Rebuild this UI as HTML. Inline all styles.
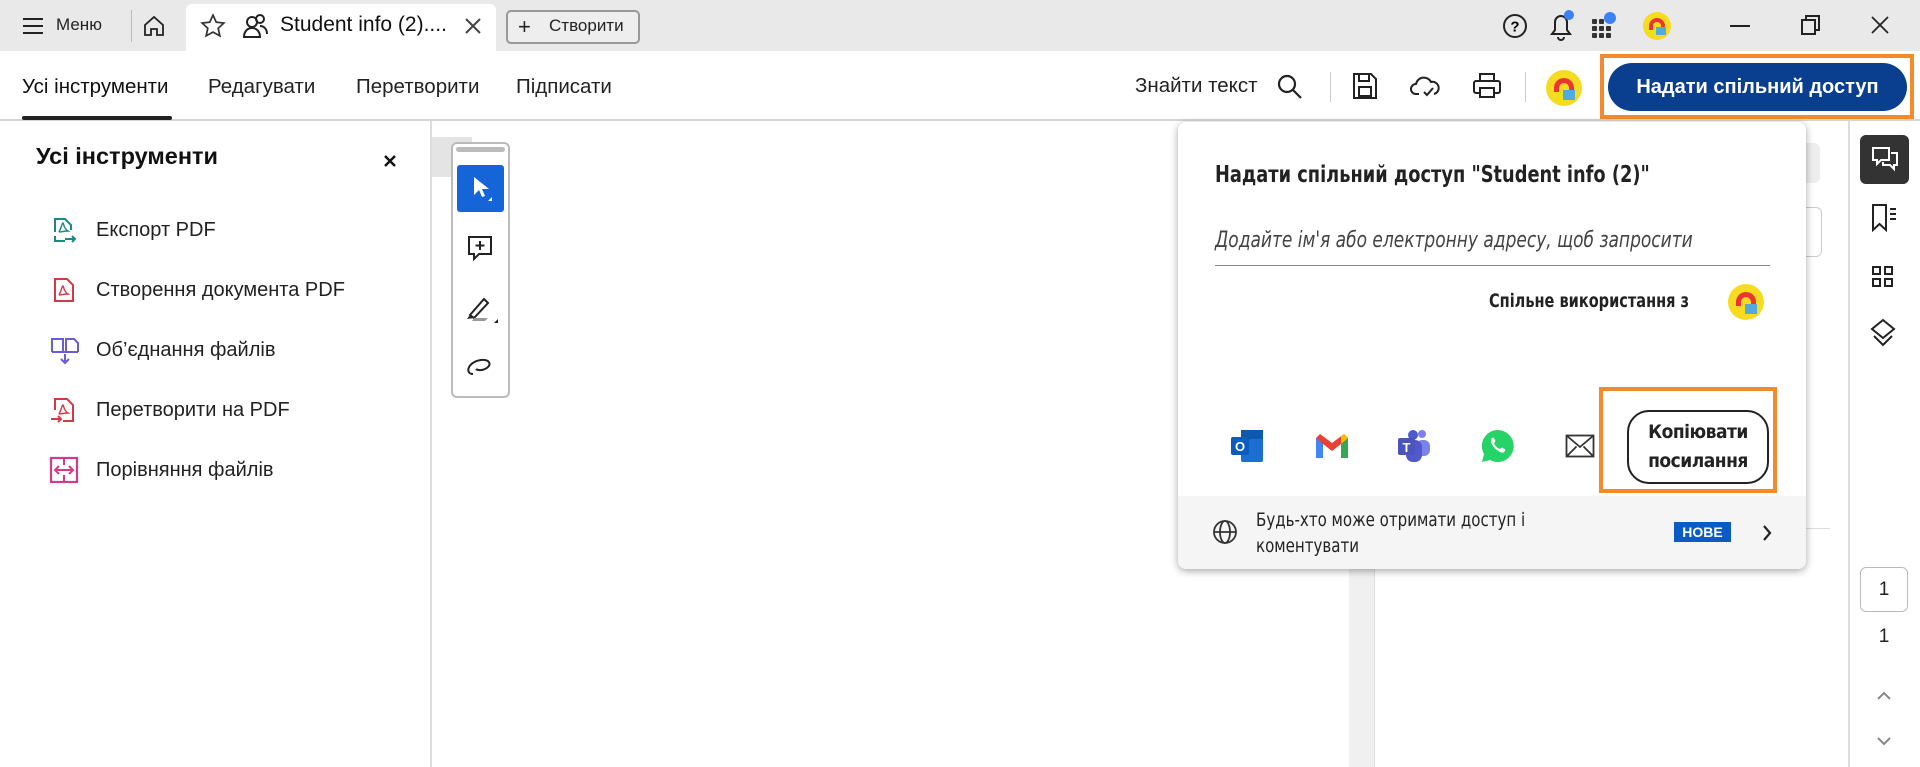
<!DOCTYPE html>
<html><head><meta charset="utf-8"><style>
*{box-sizing:border-box;margin:0;padding:0}
body{width:1920px;height:767px;overflow:hidden;background:#fff;font-family:"Liberation Sans",sans-serif;color:#222;position:relative}
.a{position:absolute}
.t{white-space:nowrap}
svg{position:absolute}
</style></head><body>
<!-- tab bar -->
<div class="a" style="left:0;top:0;width:1920px;height:51px;background:#e9e9e9"></div>
<div class="a" style="left:186px;top:4px;width:310px;height:47px;background:#fff;border-radius:6px 6px 0 0"></div>
<svg style="left:22px;top:17px" width="22" height="18"><path d="M1 2h20M1 9h20M1 16h20" stroke="#222" stroke-width="2"/></svg>
<div class="a t" style="left:56px;top:15px;font-size:17px">Меню</div>
<div class="a" style="left:131px;top:10px;width:1px;height:32px;background:#bbb"></div>
<svg style="left:142px;top:14px" width="24" height="24" viewBox="0 0 24 24"><path d="M3 11L12 3l9 8v10h-6v-6h-6v6H3z" fill="none" stroke="#222" stroke-width="1.8"/></svg>
<svg style="left:200px;top:13px" width="26" height="26" viewBox="0 0 24 24"><path d="M12 2l3 6.5 7 .8-5.2 4.8 1.5 7L12 17.6 5.7 21.1l1.5-7L2 9.3l7-.8z" fill="none" stroke="#333" stroke-width="1.6"/></svg>
<svg style="left:242px;top:13px" width="28" height="26" viewBox="0 0 28 26"><circle cx="10" cy="9" r="5" fill="none" stroke="#222" stroke-width="2"/><path d="M2 24c0-6 4-9 8-9s8 3 8 9z" fill="none" stroke="#222" stroke-width="2"/><circle cx="18" cy="6" r="4" fill="none" stroke="#222" stroke-width="2"/><path d="M18 13c4 0 7 3 7 8" fill="none" stroke="#222" stroke-width="2"/></svg>
<div class="a t" style="left:280px;top:13px;font-size:21px;color:#111">Student info (2)....</div>
<svg style="left:464px;top:17px" width="18" height="18"><path d="M2 2l14 14M16 2L2 16" stroke="#444" stroke-width="2"/></svg>
<div class="a" style="left:506px;top:10px;width:134px;height:34px;border:2px solid #999;border-radius:5px;background:#eee"></div>
<div class="a t" style="left:518px;top:14px;font-size:22px">+</div>
<div class="a t" style="left:549px;top:16px;font-size:17px">Створити</div>
<!-- top right icons -->
<svg style="left:1502px;top:13px" width="26" height="26" viewBox="0 0 26 26"><circle cx="13" cy="13" r="11" fill="none" stroke="#222" stroke-width="2"/><text x="13" y="18.5" font-size="15" font-weight="bold" text-anchor="middle" font-family="Liberation Sans">?</text></svg>
<svg style="left:1547px;top:10px" width="28" height="32" viewBox="0 0 28 32"><path d="M5 24h18l-3-4v-8a6 6 0 0 0-12 0v8z" fill="none" stroke="#222" stroke-width="2"/><path d="M11 27a3 3 0 0 0 6 0" fill="none" stroke="#222" stroke-width="2"/><circle cx="22" cy="5" r="5" fill="#3b82f6"/></svg>
<svg style="left:1590px;top:11px" width="30" height="28" viewBox="0 0 30 28"><g fill="#333"><rect x="2" y="8" width="5" height="5" rx="1"/><rect x="9" y="8" width="5" height="5" rx="1"/><rect x="2" y="15" width="5" height="5" rx="1"/><rect x="9" y="15" width="5" height="5" rx="1"/><rect x="16" y="15" width="5" height="5" rx="1"/><rect x="2" y="22" width="5" height="5" rx="1"/><rect x="9" y="22" width="5" height="5" rx="1"/><rect x="16" y="22" width="5" height="5" rx="1"/></g><circle cx="20" cy="7" r="6" fill="#3b82f6"/></svg>
<div class="a" style="left:1643px;top:12px;width:28px;height:28px;border-radius:50%;background:#f5dc20;overflow:hidden"><div class="a" style="left:6px;top:6px;width:16px;height:12px;border-radius:8px 8px 0 0;border:4px solid #e33;border-bottom:0"></div><div class="a" style="left:13px;top:15px;width:10px;height:8px;background:#5ad"></div></div>
<div class="a" style="left:1730px;top:25px;width:20px;height:2px;background:#222"></div>
<svg style="left:1800px;top:14px" width="22" height="22"><rect x="2" y="6" width="13" height="14" fill="none" stroke="#222" stroke-width="2"/><path d="M6 6V2h13v14h-4" fill="none" stroke="#222" stroke-width="2"/></svg>
<svg style="left:1870px;top:15px" width="20" height="20"><path d="M2 2l16 16M18 2L2 18" stroke="#222" stroke-width="1.8"/></svg>
<!-- toolbar -->
<div class="a" style="left:0;top:119px;width:1920px;height:2px;background:#d5d5d5"></div>
<div class="a t" style="left:22px;top:75px;font-size:20.5px;color:#111">Усі інструменти</div>
<div class="a" style="left:22px;top:116px;width:150px;height:4px;background:#222;border-radius:2px"></div>
<div class="a t" style="left:208px;top:75px;font-size:20.5px">Редагувати</div>
<div class="a t" style="left:356px;top:75px;font-size:20.5px">Перетворити</div>
<div class="a t" style="left:516px;top:75px;font-size:20.5px">Підписати</div>
<div class="a t" style="left:1135px;top:74px;font-size:20.5px">Знайти текст</div>
<svg style="left:1276px;top:73px" width="28" height="28"><circle cx="11" cy="11" r="8" fill="none" stroke="#222" stroke-width="2.2"/><path d="M17 17l8 8" stroke="#222" stroke-width="2.2"/></svg>
<div class="a" style="left:1330px;top:72px;width:1px;height:30px;background:#ccc"></div>
<svg style="left:1352px;top:72px" width="26" height="28"><path d="M2 2h17l5 5v19H2z" fill="none" stroke="#222" stroke-width="2"/><rect x="7" y="2" width="10" height="7" fill="none" stroke="#222" stroke-width="2"/><rect x="7" y="15" width="12" height="9" fill="none" stroke="#222" stroke-width="2"/></svg>
<svg style="left:1410px;top:72px" width="30" height="28"><path d="M9 22H6a5 5 0 0 1 0-10 8 8 0 0 1 15-2 6 6 0 0 1 3 12" fill="none" stroke="#222" stroke-width="2"/><path d="M14 20l3 3 6-7" fill="none" stroke="#222" stroke-width="2"/></svg>
<svg style="left:1472px;top:72px" width="30" height="28"><rect x="8" y="2" width="14" height="7" fill="none" stroke="#222" stroke-width="2"/><rect x="2" y="9" width="26" height="12" rx="2" fill="none" stroke="#222" stroke-width="2"/><rect x="8" y="16" width="14" height="9" fill="#fff" stroke="#222" stroke-width="2"/></svg>
<div class="a" style="left:1525px;top:72px;width:1px;height:30px;background:#ccc"></div>
<div class="a" style="left:1546px;top:70px;width:36px;height:36px;border-radius:50%;background:#f5dc20;overflow:hidden"><div class="a" style="left:8px;top:8px;width:20px;height:14px;border-radius:10px 10px 0 0;border:5px solid #e33;border-bottom:0"></div><div class="a" style="left:17px;top:20px;width:12px;height:10px;background:#5ad"></div></div>
<div class="a" style="left:1600px;top:54px;width:314px;height:65px;border:4px solid #f58a2a"></div>
<div class="a" style="left:1608px;top:63px;width:299px;height:48px;background:#0a3f8f;border-radius:24px;color:#fff;font-size:20px;font-weight:bold;text-align:center;line-height:48px">Надати спільний доступ</div>
<!-- left panel -->
<div class="a" style="left:430px;top:121px;width:2px;height:646px;background:#ddd"></div>
<div class="a t" style="left:36px;top:143px;font-size:23.5px;font-weight:bold;color:#111">Усі інструменти</div>
<svg style="left:383px;top:154px" width="14" height="14"><path d="M2 2l10 10M12 2L2 12" stroke="#111" stroke-width="2.4"/></svg>
<svg style="left:51px;top:216px" width="28" height="28" viewBox="0 0 28 28"><path d="M4 16V3h10l6 6v5M4 20v5h10" fill="none" stroke="#1a8a80" stroke-width="2"/><path d="M8 16c3-6 3-9 4-9s0 5 5 8c-4 0-7 1-9 1" fill="none" stroke="#1a8a80" stroke-width="1.4"/><path d="M14 23h10M21 20l3 3-3 3" fill="none" stroke="#1a8a80" stroke-width="2"/></svg>
<div class="a t" style="left:96px;top:219px;font-size:20px">Експорт PDF</div>
<svg style="left:51px;top:276px" width="28" height="28" viewBox="0 0 28 28"><path d="M4 25V3h12l6 6v16z" fill="none" stroke="#d43a45" stroke-width="2"/><path d="M8 19c3-6 3-9 4-9s0 5 5 8c-4 0-7 1-9 1" fill="none" stroke="#d43a45" stroke-width="1.4"/></svg>
<div class="a t" style="left:96px;top:279px;font-size:20px">Створення документа PDF</div>
<svg style="left:49px;top:336px" width="32" height="30" viewBox="0 0 32 30"><path d="M3 16V3h11v13M17 16V3h8l4 4v9" fill="none" stroke="#6a5bd6" stroke-width="2"/><path d="M3 16h26M16 18v9M12 23l4 4 4-4" fill="none" stroke="#6a5bd6" stroke-width="2"/></svg>
<div class="a t" style="left:96px;top:339px;font-size:20px">Об’єднання файлів</div>
<svg style="left:49px;top:396px" width="30" height="30" viewBox="0 0 30 30"><path d="M6 14V3h12l6 6v16H14" fill="none" stroke="#d43a45" stroke-width="2"/><path d="M10 18c3-6 3-9 4-9s0 5 5 8c-4 0-7 1-9 1" fill="none" stroke="#d43a45" stroke-width="1.4"/><path d="M2 23h10M9 20l3 3-3 3" fill="none" stroke="#d43a45" stroke-width="2"/></svg>
<div class="a t" style="left:96px;top:399px;font-size:20px">Перетворити на PDF</div>
<svg style="left:49px;top:456px" width="30" height="28" viewBox="0 0 30 28"><rect x="2" y="2" width="26" height="24" fill="none" stroke="#d43a8a" stroke-width="2.2"/><path d="M15 2v7M15 19v7M7 14h16M10 10l-4 4 4 4M20 10l4 4-4 4" fill="none" stroke="#d43a8a" stroke-width="2"/></svg>
<div class="a t" style="left:96px;top:459px;font-size:20px">Порівняння файлів</div>
<!-- doc area -->
<div class="a" style="left:432px;top:137px;width:40px;height:40px;background:#e4e4e4"></div>
<div class="a" style="left:451px;top:142px;width:59px;height:256px;border:2px solid #bbb;border-radius:6px;background:#fff"></div>
<div class="a" style="left:456px;top:147px;width:49px;height:5px;background:#bbb;border-radius:3px"></div>
<div class="a" style="left:457px;top:165px;width:47px;height:47px;background:#1565d8;border-radius:3px"></div>
<svg style="left:470px;top:175px" width="22" height="28"><path d="M4 2v18l5-5 3 7 3-1-3-7h7z" fill="#fff"/><path d="M18 26h4v-4z" fill="#fff"/></svg>
<svg style="left:466px;top:234px" width="28" height="30"><path d="M3 3h22v17H13l-5 5v-5H3z" fill="none" stroke="#222" stroke-width="2"/><path d="M14 7v9M9.5 11.5h9" stroke="#222" stroke-width="2"/></svg>
<svg style="left:464px;top:293px" width="36" height="32"><path d="M6 22l14-16 4 4-14 15z" fill="none" stroke="#222" stroke-width="2"/><path d="M3 26l3-4 4 3z" fill="#222"/><path d="M10 25h14l-3 3H8z" fill="#999"/><path d="M30 30h4v-4z" fill="#222"/></svg>
<svg style="left:465px;top:354px" width="30" height="24"><path d="M8 20c-8 0-6-12 8-14 10-1 11 6 4 9-4 2-8 1-9 0" fill="none" stroke="#222" stroke-width="2"/></svg>
<div class="a" style="left:1349px;top:569px;width:25px;height:198px;background:#f0f0f0"></div>
<div class="a" style="left:1374px;top:569px;width:1px;height:198px;background:#ddd"></div>
<div class="a" style="left:1790px;top:143px;width:30px;height:40px;background:#eee;border-radius:6px"></div>
<div class="a" style="left:1790px;top:207px;width:32px;height:50px;border:1px solid #ccc;border-radius:6px"></div>
<div class="a" style="left:1778px;top:528px;width:52px;height:1px;background:#ddd"></div>
<!-- right rail -->
<div class="a" style="left:1848px;top:121px;width:2px;height:646px;background:#ddd"></div>
<div class="a" style="left:1860px;top:135px;width:49px;height:49px;background:#333;border-radius:6px"></div>
<svg style="left:1871px;top:146px" width="28" height="28"><path d="M2 2h16v12h-8l-4 4v-4H2z" fill="none" stroke="#fff" stroke-width="2"/><path d="M20 7h6v12h-3v4l-4-4h-7v-3" fill="none" stroke="#fff" stroke-width="2"/></svg>
<svg style="left:1870px;top:203px" width="28" height="30"><path d="M3 2h13v25l-6.5-6L3 27z" fill="none" stroke="#222" stroke-width="2"/><path d="M20 6h6M20 11h6M20 16h6" stroke="#222" stroke-width="2"/></svg>
<svg style="left:1871px;top:265px" width="24" height="24"><g fill="none" stroke="#222" stroke-width="2"><rect x="2" y="2" width="7" height="7"/><rect x="14" y="2" width="7" height="7"/><rect x="2" y="14" width="7" height="7"/><rect x="14" y="14" width="7" height="7"/></g></svg>
<svg style="left:1868px;top:318px" width="30" height="30"><path d="M15 2l11 9-11 9-11-9z" fill="none" stroke="#222" stroke-width="2"/><path d="M6 18l9 9 9-9" fill="none" stroke="#222" stroke-width="2"/></svg>
<div class="a" style="left:1860px;top:567px;width:48px;height:45px;border:1px solid #bbb;border-radius:6px;text-align:center;line-height:43px;font-size:19px">1</div>
<div class="a" style="left:1860px;top:626px;width:48px;text-align:center;font-size:19px">1</div>
<svg style="left:1876px;top:689px" width="16" height="12"><path d="M2 10l6-6 6 6" fill="none" stroke="#888" stroke-width="2"/></svg>
<svg style="left:1876px;top:736px" width="16" height="12"><path d="M2 2l6 6 6-6" fill="none" stroke="#888" stroke-width="2"/></svg>
<!-- share popup -->
<div class="a" style="left:1178px;top:122px;width:628px;height:447px;background:#fff;border-radius:8px;box-shadow:0 2px 8px rgba(0,0,0,.35);overflow:hidden">
 <div class="a t" style="left:37px;top:40px;font-size:23px;font-weight:bold;color:#222;font-family:'DejaVu Sans Condensed','DejaVu Sans',sans-serif;transform:scaleX(.86);transform-origin:left">Надати спільний доступ "Student info (2)"</div>
 <div class="a t" style="left:37px;top:106px;font-size:22px;font-style:italic;color:#444;font-family:'DejaVu Sans Condensed','DejaVu Sans',sans-serif;transform:scaleX(.86);transform-origin:left">Додайте ім'я або електронну адресу, щоб запросити</div>
 <div class="a" style="left:37px;top:143px;width:555px;height:1px;background:#888"></div>
 <div class="a t" style="left:311px;top:168px;font-size:19px;font-weight:bold;font-family:'DejaVu Sans Condensed','DejaVu Sans',sans-serif;transform:scaleX(.85);transform-origin:left">Спільне використання з</div>
 <div class="a" style="left:550px;top:162px;width:36px;height:36px;border-radius:50%;background:#f5dc20;overflow:hidden"><div class="a" style="left:8px;top:8px;width:20px;height:14px;border-radius:10px 10px 0 0;border:5px solid #e33;border-bottom:0"></div><div class="a" style="left:17px;top:20px;width:12px;height:10px;background:#5ad"></div></div>
 <svg style="left:51px;top:306px" width="36" height="36" viewBox="0 0 36 36"><rect x="12" y="2" width="22" height="32" rx="2" fill="#1c6fd1"/><rect x="12" y="2" width="22" height="9" fill="#0f58b0"/><rect x="2" y="9" width="18" height="18" rx="2" fill="#0b5cbe"/><text x="11" y="23" font-size="13" font-weight="bold" fill="#fff" text-anchor="middle" font-family="Liberation Sans">O</text></svg>
 <svg style="left:136px;top:310px" width="36" height="28" viewBox="0 0 36 28"><path d="M2 6v20h7V12l9 7 9-7v14h7V6l-4-4-12 9L6 2z" fill="#e94235"/><path d="M2 6v20h7V12z" fill="#4285f4"/><path d="M34 6v20h-7V12z" fill="#34a853"/><path d="M27 12l7-6-4-4-3 2z" fill="#fbbc04"/></svg>
 <svg style="left:218px;top:306px" width="36" height="36" viewBox="0 0 36 36"><circle cx="26" cy="6" r="4" fill="#7b83eb"/><rect x="20" y="12" width="14" height="16" rx="6" fill="#7b83eb"/><circle cx="17" cy="7" r="5" fill="#5059c9"/><rect x="10" y="12" width="16" height="22" rx="7" fill="#5059c9"/><rect x="2" y="10" width="17" height="17" rx="2" fill="#4b53bc"/><text x="10.5" y="24" font-size="13" font-weight="bold" fill="#fff" text-anchor="middle" font-family="Liberation Sans">T</text></svg>
 <svg style="left:302px;top:306px" width="36" height="36" viewBox="0 0 36 36"><path d="M18 2a16 16 0 0 0-14 24l-2 8 8-2A16 16 0 1 0 18 2z" fill="#25d366"/><path d="M12 10c1-1 2 0 3 2s0 2-1 3c1 3 3 5 6 6 1-1 2-2 3-1s3 1 2 3-3 2-5 1c-4-2-8-6-9-10 0-2 0-3 1-4z" fill="#fff"/></svg>
 <svg style="left:387px;top:312px" width="30" height="24"><rect x="1.5" y="1.5" width="27" height="21" fill="none" stroke="#333" stroke-width="1.8"/><path d="M1.5 1.5L15 13 28.5 1.5M1.5 22.5l10-10M28.5 22.5l-10-10" fill="none" stroke="#333" stroke-width="1.8"/></svg>
 <div class="a" style="left:421px;top:265px;width:178px;height:106px;border:4px solid #f58a2a"></div>
 <div class="a" style="left:449px;top:288px;width:142px;height:74px;border:2.5px solid #222;border-radius:22px;text-align:center;font-size:19px;font-weight:bold;line-height:29px;padding-top:6px;font-family:'DejaVu Sans Condensed','DejaVu Sans',sans-serif;letter-spacing:-.5px">Копіювати<br>посилання</div>
 <div class="a" style="left:0;top:374px;width:628px;height:73px;background:#f5f5f5"></div>
 <svg style="left:34px;top:397px" width="26" height="26" viewBox="0 0 26 26"><g fill="none" stroke="#333" stroke-width="1.8"><circle cx="13" cy="13" r="11"/><ellipse cx="13" cy="13" rx="5" ry="11"/><path d="M2 13h22"/></g></svg>
 <div class="a" style="left:78px;top:385px;font-size:19px;line-height:26px;color:#222;font-family:'DejaVu Sans Condensed','DejaVu Sans',sans-serif;transform:scaleX(.88);transform-origin:left;white-space:nowrap">Будь-хто може отримати доступ і<br>коментувати</div>
 <div class="a" style="left:496px;top:400px;width:57px;height:20px;background:#0a5cc4;color:#fff;font-size:14px;font-weight:bold;text-align:center;line-height:20px">НОВЕ</div>
 <svg style="left:583px;top:402px" width="12" height="18"><path d="M3 2l6 7-6 7" fill="none" stroke="#222" stroke-width="2.2"/></svg>
</div>
</body></html>
